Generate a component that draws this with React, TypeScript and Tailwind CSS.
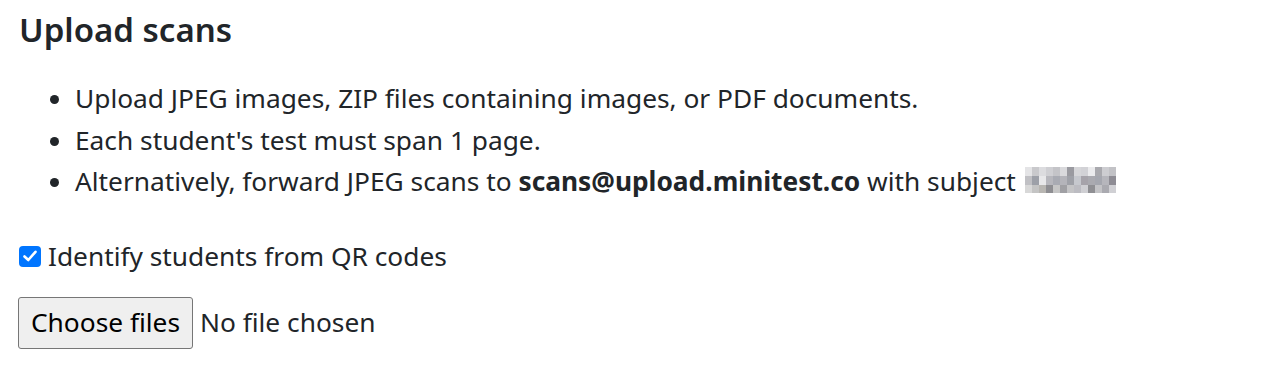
import React from "react";

const cells = [
  ["#e4e4e6", "#c9c9cc", "#dcdcdf", "#cfcfd3", "#c4c4c8", "#d9d9dc", "#9a9aa0", "#d6d6d9", "#d2d2d6", "#ebebed", "#a9a9ae", "#cdcdd1", "#c2c2c6"],
  ["#c0c0c4", "#9da0a8", "#e8e8ea", "#b7b7bd", "#a9abb3", "#b4b4ba", "#9fa1a8", "#c6c8ce", "#a6a3aa", "#aaaab0", "#a5a7af", "#b6b6bc", "#8e8c94"],
  ["#d8d8d8", "#c4c4c4", "#b8b6b2", "#8e8e92", "#c6c6c6", "#a0a0a4", "#c4c4c6", "#bcbcc2", "#cfcfd3", "#8f8f93", "#c3c3c6", "#aaaab0", "#d0d0d4"],
];

function Redacted() {
  return (
    <span className="inline-grid grid-cols-[repeat(13,7px)] grid-rows-[repeat(3,8.6px)] align-[15px] ml-[2px]">
      {cells.flat().map((c, i) => (
        <span key={i} style={{ backgroundColor: c }} />
      ))}
    </span>
  );
}

export default function App() {
  return (
    <div className="bg-white text-[#212529] font-['Noto_Sans','Open_Sans',sans-serif] text-[26.3px] leading-[41.5px] px-[19px] pt-[5px]">
      <h4 className="text-[33px] font-semibold leading-[50px] mb-[23px]">Upload scans</h4>
      <ul className="list-disc pl-[56px] mb-[33px]">
        <li>Upload JPEG images, ZIP files containing images, or PDF documents.</li>
        <li>Each student's test must span 1 page.</li>
        <li>
          Alternatively, forward JPEG scans to <b>scans@upload.minitest.co</b> with subject <Redacted />
        </li>
      </ul>
      <div className="flex items-center gap-[7px] mb-[20px]">
        <span className="w-[22px] h-[21px] rounded-[4px] bg-[#0075ff] flex items-center justify-center">
          <svg width="16" height="16" viewBox="0 0 16 16" fill="none">
            <path d="M2.5 8.5 L6.3 12 L13.5 3.8" stroke="white" strokeWidth="2.6" strokeLinecap="round" strokeLinejoin="round" />
          </svg>
        </span>
        <label>Identify students from QR codes</label>
      </div>
      <div className="flex items-center gap-[7px] -ml-px">
        <button className="h-[52px] px-[12px] bg-[#efefef] border border-[#767676] rounded-[3px] text-[#000]">Choose files</button>
        <span>No file chosen</span>
      </div>
    </div>
  );
}
